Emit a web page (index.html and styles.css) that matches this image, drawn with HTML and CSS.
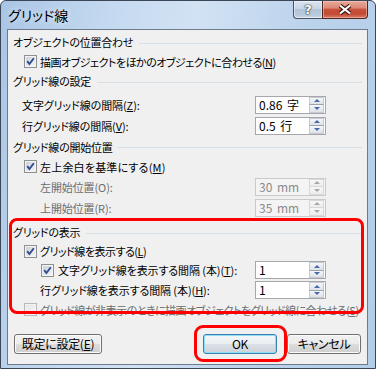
FILE: index.html
```html
<!DOCTYPE html>
<html lang="ja">
<head>
<meta charset="utf-8">
<title>グリッド線</title>
<link rel="stylesheet" href="styles.css">
</head>
<body>
<div class="window">
  <div class="titlebar">
    <span class="title">グリッド線</span>
    <div class="caption">
      <div class="cap-btn cap-help"><span class="qmark">?</span></div>
      <div class="cap-btn cap-close">
        <svg class="xicon" width="14" height="11" viewBox="0 0 14 11"><path d="M2 1.5 L12 9.5 M12 1.5 L2 9.5" stroke="#3a1510" stroke-width="4.2"/><path d="M2 1.5 L12 9.5 M12 1.5 L2 9.5" stroke="#fff" stroke-width="2.2"/></svg>
      </div>
    </div>
  </div>
  <div class="client">
    <div class="grp"><span>オブジェクトの位置合わせ</span><span class="rule"></span></div>
    <div class="chk-row"><span class="cb"><svg width="11" height="11" viewBox="0 0 11 11"><path d="M2.2 5.2 L4.4 8 L8.8 2.2" class="tick"/></svg></span><span class="txt">描画オブジェクトをほかのオブジェクトに合わせる(<u>N</u>)</span></div>

    <div class="grp"><span>グリッド線の設定</span><span class="rule"></span></div>
    <div class="spin-row lead"><span class="lbl">文字グリッド線の間隔(<u>Z</u>):</span><div class="spin"><span class="val">0.86 字</span><span class="sb"><i class="up"></i><i class="dn"></i></span></div></div>
    <div class="spin-row"><span class="lbl">行グリッド線の間隔(<u>V</u>):</span><div class="spin"><span class="val">0.5 行</span><span class="sb"><i class="up"></i><i class="dn"></i></span></div></div>

    <div class="grp tall"><span>グリッド線の開始位置</span><span class="rule"></span></div>
    <div class="chk-row"><span class="cb"><svg width="11" height="11" viewBox="0 0 11 11"><path d="M2.2 5.2 L4.4 8 L8.8 2.2" class="tick"/></svg></span><span class="txt wide-txt">左上余白を基準にする(<u>M</u>)</span></div>
    <div class="spin-row deep disabled"><span class="lbl">左開始位置(O):</span><div class="spin"><span class="val">30 mm</span><span class="sb"><i class="up"></i><i class="dn"></i></span></div></div>
    <div class="spin-row deep disabled"><span class="lbl">上開始位置(R):</span><div class="spin"><span class="val">35 mm</span><span class="sb"><i class="up"></i><i class="dn"></i></span></div></div>

    <div class="grp gap"><span>グリッドの表示</span><span class="rule"></span></div>
    <div class="chk-row short"><span class="cb"><svg width="11" height="11" viewBox="0 0 11 11"><path d="M2.2 5.2 L4.4 8 L8.8 2.2" class="tick"/></svg></span><span class="txt">グリッド線を表示する(<u>L</u>)</span></div>
    <div class="spin-row nested"><span class="cb"><svg width="11" height="11" viewBox="0 0 11 11"><path d="M2.2 5.2 L4.4 8 L8.8 2.2" class="tick"/></svg></span><span class="lbl">文字グリッド線を表示する間隔 (本)(<u>T</u>):</span><div class="spin"><span class="val">1</span><span class="sb"><i class="up"></i><i class="dn"></i></span></div></div>
    <div class="spin-row deep compact"><span class="lbl">行グリッド線を表示する間隔 (本)(<u>H</u>):</span><div class="spin"><span class="val">1</span><span class="sb"><i class="up"></i><i class="dn"></i></span></div></div>
    <div class="chk-row disabled"><span class="cb off"></span><span class="txt">グリッド線が非表示のときに描画オブジェクトをグリッド線に合わせる(<u>S</u>)</span></div>

    <div class="btn-row">
      <button class="btn wide">既定に設定(<u>E</u>)</button>
      <button class="btn default">OK</button>
      <button class="btn">キャンセル</button>
    </div>
  </div>
  <div class="mark mark-grid"></div>
  <div class="mark mark-ok"></div>
</div>
</body>
</html>
```

FILE: styles.css
```css
* { box-sizing: border-box; }
html, body { margin: 0; padding: 0; }
body {
  width: 376px;
  height: 369px;
  overflow: hidden;
  background: #ffffff;
  font-family: "Noto Sans CJK JP", "Noto Sans", sans-serif;
  font-size: 11px;
  letter-spacing: -0.5px;
  font-feature-settings: "palt" 1;
  color: #000;
}
u { text-decoration: underline; text-underline-offset: 1px; }

.window {
  position: relative;
  width: 376px;
  height: 369px;
  border: 1px solid #3b4656;
  border-radius: 6px 6px 0 0;
  padding: 0 7px 3px 6px;
  display: flex;
  flex-direction: column;
  background: linear-gradient(100deg, #a9c5e5 0%, #c4d9f0 25%, #d2e2f4 45%, #bcd3ec 70%, #b3cde9 100%);
}

.titlebar {
  height: 28px;
  flex-shrink: 0;
  display: flex;
  align-items: flex-start;
}
.title {
  margin: 5px 0 0 1px;
  font-size: 14px;
  letter-spacing: 0;
  line-height: 18px;
  text-shadow: 0 0 6px rgba(255,255,255,0.9);
}
.caption { margin-left: auto; display: flex; }
.cap-btn {
  height: 18px;
  border: 1px solid #4a5360;
  border-top: none;
  display: flex;
  align-items: center;
  justify-content: center;
}
.cap-help {
  width: 29px;
  border-right: none;
  border-radius: 0 0 0 4px;
  background: linear-gradient(#dbe5f1 0%, #c9d6e6 45%, #b3c3d7 50%, #b9cadf 85%, #cfdcec 100%);
  box-shadow: inset 0 0 0 1px rgba(255,255,255,0.45);
}
.qmark {
  font-family: "DejaVu Sans", sans-serif;
  font-weight: bold;
  font-size: 13px;
  letter-spacing: 0;
  line-height: 14px;
  color: #fff;
  text-shadow: 0 0 1px #333, 0 0 1px #333, 0 0 2px #445;
}
.cap-close {
  width: 46px;
  border-radius: 0 0 4px 0;
  border-color: #4f2620;
  background: linear-gradient(#e9a99a 0%, #dc8a76 40%, #c9503a 50%, #c34a32 75%, #d97a66 100%);
  box-shadow: inset 0 0 0 1px rgba(255,220,210,0.45);
}
.xicon { display: block; }

.client {
  width: 361px;
  height: 336px;
  flex-shrink: 0;
  border: 1px solid #6d7b8c;
  background: #f0f0f0;
  padding: 2px 5px 0 5px;
  display: flex;
  flex-direction: column;
}

.grp {
  height: 20px;
  display: flex;
  align-items: center;
  gap: 6px;
  line-height: 16px;
  letter-spacing: -0.25px;
  white-space: nowrap;
}
.grp.tall { height: 21px; }
.grp.gap { margin-top: 4px; }
.rule {
  flex: 1;
  height: 1px;
  margin-top: 2px;
  background: #d5dfe5;
}

.chk-row {
  height: 19px;
  display: flex;
  align-items: center;
  gap: 3px;
  padding-left: 11px;
  line-height: 16px;
  white-space: nowrap;
}
.chk-row.short { height: 18px; }
.wide-txt { letter-spacing: 0.2px; }
.disabled { color: #6d6d6d; }

.cb {
  width: 13px;
  height: 13px;
  flex-shrink: 0;
  border: 1px solid #8e8f8f;
  background: linear-gradient(135deg, #c6ccd5 0%, #e2e5ea 55%, #f6f7f8 100%);
  box-shadow: inset 0 0 0 1px #f4f4f4;
  display: flex;
  align-items: center;
  justify-content: center;
}
.cb svg { display: block; }
.tick { fill: none; stroke: #2d4a8f; stroke-width: 1.9; }
.cb.off {
  border-color: #b8b8b8;
  background: linear-gradient(135deg, #e6e6e6 0%, #f4f4f4 100%);
}

.spin-row {
  height: 21px;
  display: flex;
  align-items: center;
  padding-left: 9px;
  line-height: 16px;
  white-space: nowrap;
}
.spin-row.lead { margin-top: 3px; }
.spin-row.deep { padding-left: 27px; }
.spin-row.nested { height: 20px; padding-left: 28px; gap: 4px; }
.spin-row.compact { height: 20px; }
.lbl { flex: 1; white-space: nowrap; letter-spacing: -0.1px; }

.spin {
  width: 71px;
  height: 18px;
  margin-right: 36px;
  flex-shrink: 0;
  border: 1px solid #a5a7ad;
  background: #fff;
  display: flex;
  color: #000;
}
.val {
  flex: 1;
  padding-left: 3px;
  font-size: 12px;
  letter-spacing: 0;
  word-spacing: 2px;
  line-height: 16px;
}
.sb {
  width: 16px;
  padding: 0 1px 0 0;
  display: flex;
  flex-direction: column;
}
.sb i {
  flex: 1;
  display: flex;
  align-items: center;
  justify-content: center;
  border: 1px solid #c3cad3;
  background: linear-gradient(#f4f6f8, #dde2e8);
}
.sb i.up { border-bottom-color: #9aa3ae; }
.sb i.dn { border-top: none; }
.sb i::before {
  content: "";
  width: 0;
  height: 0;
  border-left: 3px solid transparent;
  border-right: 3px solid transparent;
}
.sb i.up::before { border-bottom: 3px solid #4b68a6; }
.sb i.dn::before { border-top: 3px solid #4b68a6; }

.disabled .spin {
  border-color: #c9cacc;
  background: #f4f4f4;
  color: #8a8a8a;
}
.disabled .sb i {
  border-color: #d8d8d8;
  background: linear-gradient(#f7f7f7, #ececec);
}
.disabled .sb i.up::before { border-bottom-color: #a8a8a8; }
.disabled .sb i.dn::before { border-top-color: #a8a8a8; }

.btn-row {
  margin-top: 15px;
  height: 20px;
  display: flex;
  padding: 0 1px 0 1px;
}
.btn {
  width: 74px;
  height: 20px;
  padding: 0;
  font-family: inherit;
  font-size: 12px;
  letter-spacing: -0.3px;
  font-feature-settings: "palt" 1;
  color: #000;
  border: 1px solid #707070;
  border-radius: 3px;
  background: linear-gradient(#f2f2f2 0%, #ebebeb 50%, #dddddd 51%, #cfcfcf 100%);
  box-shadow: inset 0 0 0 1px #fbfbfb;
  line-height: 16px;
}
.btn.wide { width: 88px; }
.btn.default {
  margin-left: auto;
  margin-right: 10px;
  border-color: #3c7fb1;
  box-shadow: inset 0 0 0 1px #8fdcf7;
  background: linear-gradient(#f3f7fa 0%, #e9eef2 50%, #dbe1e6 51%, #ccd3d9 100%);
}

.mark {
  position: absolute;
  border: 3px solid #ff0000;
  border-radius: 8px;
  pointer-events: none;
}
.mark-grid { left: 8px; top: 217px; width: 355px; height: 96px; }
.mark-ok { left: 193px; top: 324px; width: 93px; height: 37px; border-radius: 9px; }
```
